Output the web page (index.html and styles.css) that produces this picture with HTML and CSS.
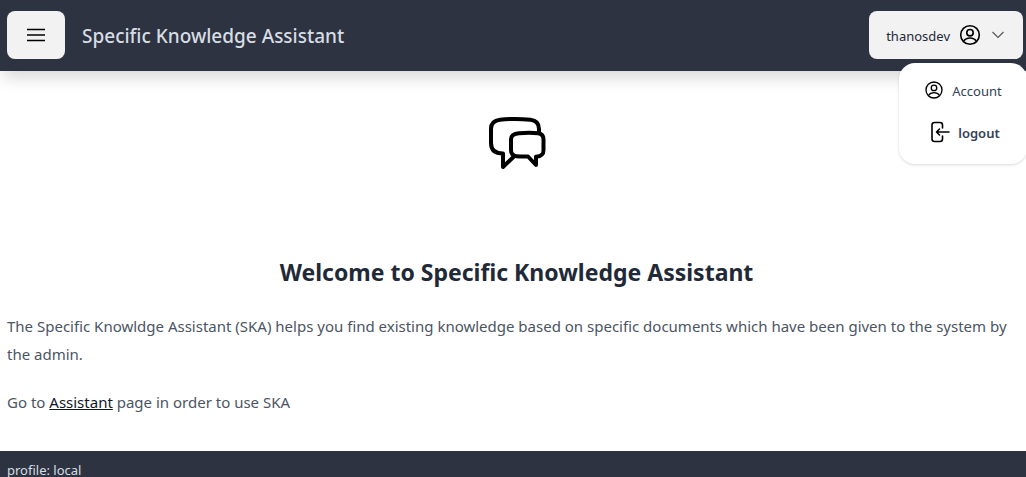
FILE: index.html
```html
<!DOCTYPE html>
<html lang="en">
<head>
<meta charset="utf-8">
<title>Specific Knowledge Assistant</title>
<link rel="stylesheet" href="styles.css">
</head>
<body>
<header class="navbar">
  <button class="btn btn-menu" type="button" aria-label="Open menu">
    <svg width="20" height="20" viewBox="0 0 20 20" fill="none" stroke="currentColor" stroke-width="1.5"><path d="M1 4.500h18M1 10h18M1 15.500h18"/></svg>
  </button>
  <span class="brand">Specific Knowledge Assistant</span>
  <div class="user">
    <button class="btn btn-user" type="button" aria-expanded="true">
      <span class="user-name">thanosdev</span>
      <svg width="24" height="24" viewBox="0 0 24 24" fill="none" stroke="#000" stroke-width="1.600"><circle cx="12" cy="12" r="9.300"/><circle cx="12" cy="9.700" r="3.200"/><path d="M5.500 18.400c1.500-2.300 3.700-3.400 6.500-3.400s5 1.100 6.500 3.400"/></svg>
      <svg class="chevron" width="12" height="12" viewBox="0 0 12 12" fill="none" stroke="#555" stroke-width="1.100"><path d="M.5 3 6 8.500 11.500 3"/></svg>
    </button>
    <ul class="menu">
      <li><a class="menu-item" href="#account">
        <svg width="20" height="20" viewBox="0 0 24 24" fill="none" stroke="#000" stroke-width="1.600"><circle cx="12" cy="12" r="9.600"/><circle cx="12" cy="9.500" r="3.300"/><path d="M5.300 18.600c1.500-2.300 3.800-3.500 6.700-3.500s5.200 1.200 6.700 3.500"/></svg>
        <span class="menu-label">Account</span></a></li>
      <li><button class="menu-item menu-logout" type="button">
        <svg width="20" height="22" viewBox="0 0 20 22" fill="none" stroke="#000" stroke-width="1.600" stroke-linecap="round" stroke-linejoin="round"><path d="M12.500 7V4A2.500 2.500 0 0 0 10 1.500H4.500A2.500 2.500 0 0 0 2 4v14a2.500 2.500 0 0 0 2.500 2.500H10a2.500 2.500 0 0 0 2.500-2.500v-3M19 11H6.500M9.500 8l-3 3 3 3"/></svg>
        <span class="menu-label">logout</span></button></li>
    </ul>
  </div>
</header>
<main class="content">
  <svg class="hero-icon" width="60" height="56" viewBox="0 0 60 56" fill="none" stroke="#000" stroke-width="4" stroke-linejoin="round"><path d="M52 18v-4c0-5-2.500-8.500-8.500-9.200Q28 3 13 4.800C7 5.500 4 9 4 14v14c0 6 3 10.500 12 10.500V52L27.500 41"/><path d="M32 18.200q11-1 19 0c4 .5 5.500 2.500 5.500 6v11c0 4-1.500 6-7.500 6.500V50l-8-8.500q-6 .3-11.500-.3c-4-.5-5.500-2.700-5.500-6v-11c0-4 3-5.500 8-6Z"/></svg>
  <h1 class="title">Welcome to Specific Knowledge Assistant</h1>
  <p class="text">The Specific Knowldge Assistant (SKA) helps you find existing knowledge based on specific documents which have been given to the system by the admin.</p>
  <p class="text">Go to <a class="link" href="#assistant">Assistant</a> page in order to use SKA</p>
</main>
<footer class="footer">profile: local</footer>
</body>
</html>
```
FILE: styles.css
```css
* { box-sizing: border-box; }
body {
  margin: 0;
  min-height: 100vh;
  display: flex;
  flex-direction: column;
  background: #fff;
  font-family: "Noto Sans", sans-serif;
  font-size: 13px;
  line-height: 20px;
  color: #1f2937;
}
.navbar {
  display: flex;
  align-items: center;
  gap: 17px;
  padding: 11px 3px 12px 7px;
  background: #2d3340;
  color: #d7dde4;
  box-shadow: 0 10px 15px -3px rgba(0, 0, 0, .15);
}
.btn {
  display: flex;
  align-items: center;
  height: 48px;
  border: 0;
  border-radius: 8px;
  background: #f2f2f2;
  color: #1f2937;
  font: inherit;
}
.btn-menu { padding: 0 19px; color: #000; }
.brand { flex: 1; padding-top: 2px; font-size: 19px; line-height: 28px; font-weight: 500; }
.user { position: relative; }
.btn-user { gap: 8px; padding: 0 19px 0 17px; }
.user-name { padding-top: 2px; }
.chevron { margin-left: 2px; }
.menu {
  position: absolute;
  top: 52px;
  right: -4px;
  z-index: 1;
  width: 128px;
  margin: 0;
  padding: 8px 8px 9px;
  list-style: none;
  border-radius: 16px;
  background: #fff;
  box-shadow: 0 1px 3px rgba(0, 0, 0, .15);
}
.menu-item {
  display: flex;
  align-items: center;
  justify-content: center;
  gap: 8px;
  width: 100%;
  height: 42px;
  padding: 0 0 4px;
  border: 0;
  background: none;
  color: #334155;
  font: inherit;
  text-decoration: none;
}
.menu-label { padding-top: 2px; }
.menu-logout { padding-left: 4px; font-weight: 600; }
.content {
  flex: 1;
  display: flex;
  flex-direction: column;
  padding: 44px 0 33px 7px;
}
.hero-icon { align-self: center; }
.title {
  margin: 83px 0 22px;
  text-align: center;
  font-size: 23px;
  line-height: 36px;
  font-weight: 700;
}
.text { margin: 0 0 20px; font-size: 15px; line-height: 28px; color: #4b5563; }
.text:last-child { margin: 0; }
.link { color: #111827; }
.footer {
  padding: 8px 7px 0;
  line-height: 22px;
  height: 26px;
  background: #2d3340;
  color: #d7dde4;
}
```
